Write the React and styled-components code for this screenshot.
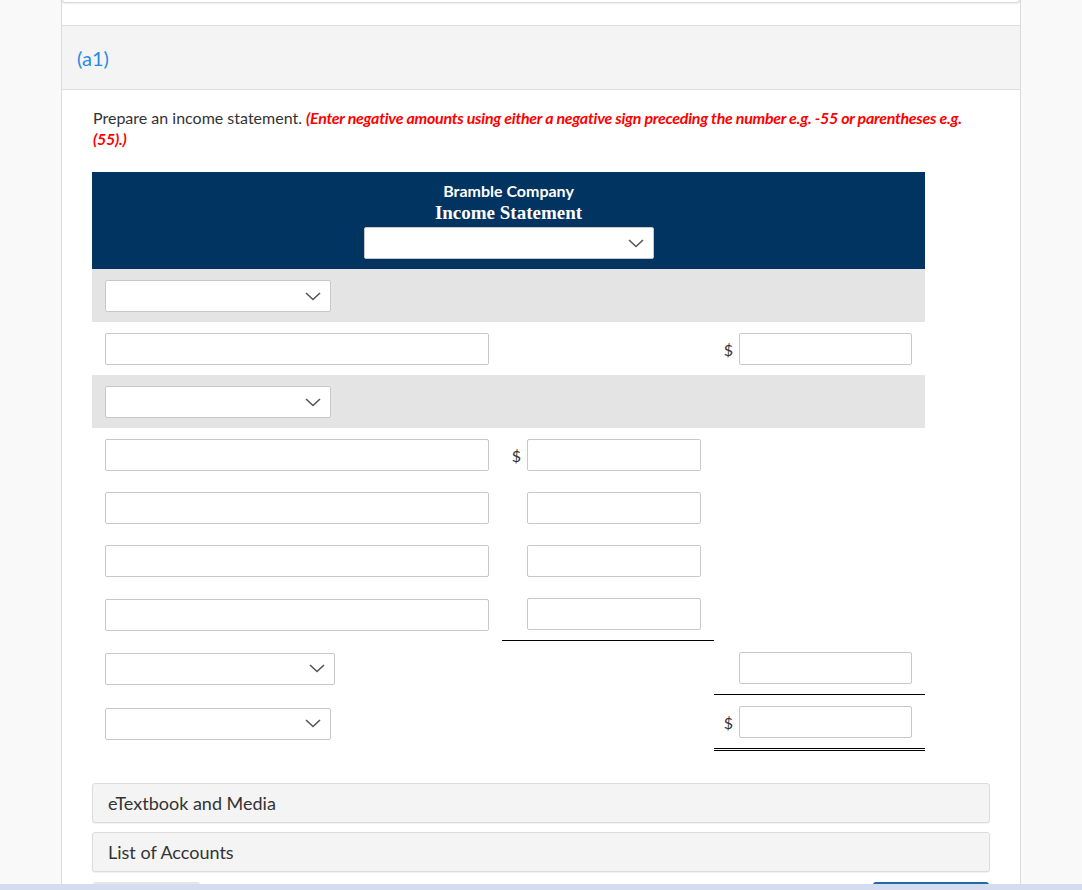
import React from "react"
import styled, { createGlobalStyle } from "styled-components"

const rows = [
    { shade: true, left: "select" },
    { left: "input", c3: { dollar: true } },
    { shade: true, left: "select" },
    { left: "input", c2: { dollar: true } },
    { left: "input", c2: {} },
    { left: "input", c2: {} },
    { left: "input", c2: {}, line2: "single" },
    { left: "select", wide: true, c3: {}, line3: "single" },
    { left: "select", c3: { dollar: true }, line3: "double" },
]

function Chevron() {
    return (
        <svg width="16" height="9" viewBox="0 0 16 9">
            <path d="M1 1 L8 7.5 L15 1" fill="none" stroke="#555" strokeWidth="1.6" />
        </svg>
    )
}

function Select({ width }) {
    return (
        <SelectBox $width={width}>
            <Chevron />
        </SelectBox>
    )
}

function Amount({ info, width }) {
    if (!info) return null
    return (
        <>
            {info.dollar && <Dollar>$</Dollar>}
            <Input $width={width} />
        </>
    )
}

export default function App() {
    return (
        <>
            <Global />
            <Column>
                <TopCard />
                <SectionHead>(a1)</SectionHead>
                <Body>
                    <Instruction>
                        Prepare an income statement.{" "}
                        <Red>(Enter negative amounts using either a negative sign preceding the number e.g. -55 or parentheses e.g. (55).)</Red>
                    </Instruction>
                    <Table>
                        <TableHead>
                            <Company>Bramble Company</Company>
                            <Title>Income Statement</Title>
                            <Select width={290} />
                        </TableHead>
                        {rows.map((row, i) => (
                            <Row key={i} $shade={row.shade}>
                                <LeftCell>
                                    {row.left === "select" ? <Select width={row.wide ? 230 : 226} /> : <Input $width={384} />}
                                </LeftCell>
                                <AmountCell $line={row.line2}>
                                    <Amount info={row.c2} width={174} />
                                </AmountCell>
                                <AmountCell $line={row.line3}>
                                    <Amount info={row.c3} width={173} />
                                </AmountCell>
                            </Row>
                        ))}
                    </Table>
                    <Panel $first>eTextbook and Media</Panel>
                    <Panel>List of Accounts</Panel>
                    <Buttons>
                        <GrayButton />
                        <BlueButton />
                    </Buttons>
                </Body>
            </Column>
            <BottomStrip />
        </>
    )
}

const Global = createGlobalStyle`
body {
    margin: 0;
    background: #f9f9f9;
    font-family: Lato, "Open Sans", sans-serif;
    color: #333;
    height: 890px;
    overflow: hidden;
}
`
const Column = styled.div`
width: 958px;
margin-left: 61px;
background: #ffffff;
border-left: 1px solid #dcdcdc;
border-right: 1px solid #dcdcdc;
min-height: 900px;
`
const TopCard = styled.div`
height: 2px;
border: 1px solid #d8d8d8;
border-top: none;
border-radius: 0 0 4px 4px;
box-shadow: 0 1px 2px rgba(0,0,0,0.08);
margin-bottom: 22px;
`
const SectionHead = styled.div`
display: flex;
align-items: center;
height: 63px;
padding-left: 15px;
background: #f4f4f4;
border-top: 1px solid #dedede;
border-bottom: 1px solid #dedede;
color: #2a8be3;
font-size: 20px;
`
const Body = styled.div`
padding: 17px 30px 0 30px;
`
const Instruction = styled.p`
margin: 0 0 23px 1px;
font-size: 16px;
line-height: 21px;
color: #333;
`
const Red = styled.span`
color: #ff0000;
font-weight: bold;
font-style: italic;
letter-spacing: -0.28px;
`
const Table = styled.div`
width: 833px;
`
const TableHead = styled.div`
display: flex;
flex-direction: column;
align-items: center;
background: #023462;
padding: 8px 0 10px;
color: #ffffff;
`
const Company = styled.div`
font-size: 16px;
font-weight: bold;
line-height: 22px;
`
const Title = styled.div`
font-family: "Liberation Serif", "Times New Roman", serif;
font-size: 19px;
font-weight: bold;
line-height: 22px;
margin-bottom: 3px;
`
const Row = styled.div`
display: grid;
grid-template-columns: 410px 212px 211px;
background: ${p => (p.$shade ? "#e4e4e4" : "transparent")};
`
const LeftCell = styled.div`
display: flex;
align-items: center;
padding: 11px 0 10px 13px;
`
const AmountCell = styled.div`
display: flex;
align-items: center;
justify-content: flex-end;
gap: 6px;
padding: 11px 13px 10px 0;
border-bottom: ${p => (p.$line === "double" ? "3px double #000" : p.$line === "single" ? "1px solid #000" : "none")};
`
const Dollar = styled.span`
font-size: 16px;
color: #333;
`
const Input = styled.div`
width: ${p => p.$width}px;
height: 32px;
box-sizing: border-box;
background: #ffffff;
border: 1px solid #c8c8c8;
border-radius: 2px;
`
const SelectBox = styled.div`
display: flex;
align-items: center;
justify-content: flex-end;
width: ${p => p.$width}px;
height: 32px;
box-sizing: border-box;
padding-right: 9px;
background: #ffffff;
border: 1px solid #c8c8c8;
border-radius: 2px;
`
const Panel = styled.div`
display: flex;
align-items: center;
width: 898px;
height: 40px;
box-sizing: border-box;
padding-left: 15px;
margin-top: ${p => (p.$first ? "32px" : "9px")};
background: #f4f4f4;
border: 1px solid #dcdcdc;
border-radius: 3px;
box-shadow: 0 1px 1px rgba(0,0,0,0.06);
font-size: 18px;
color: #333;
`
const Buttons = styled.div`
display: flex;
justify-content: space-between;
width: 898px;
margin-top: 10px;
`
const GrayButton = styled.div`
width: 107px;
height: 36px;
margin-left: 1px;
background: #e6e6e6;
border-radius: 3px;
`
const BlueButton = styled.div`
width: 116px;
height: 36px;
margin-right: 1px;
background: #1f6aa8;
border-radius: 3px;
`
const BottomStrip = styled.div`
position: fixed;
left: 0;
right: 0;
bottom: 0;
height: 6px;
background: #d4dcf0;
`
